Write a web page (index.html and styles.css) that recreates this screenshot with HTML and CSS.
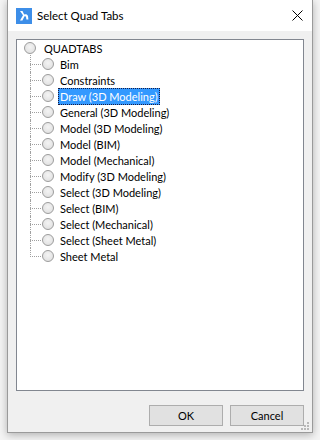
FILE: index.html
```html
<!DOCTYPE html>
<html lang="en">
<head>
    <meta charset="UTF-8">
    <title>Select Quad Tabs</title>
    <link rel="stylesheet" href="styles.css">
</head>
<body>
    <div class="window">
        <div class="titlebar">
            <svg class="logo" width="16" height="16" viewBox="0 0 16 16">
                <rect width="16" height="16" fill="#3d8ee8"/>
                <path d="M4 3 L6.5 3 L8.2 6.6 C9.5 6 11.5 6.3 12 8 L12.4 11.5 L10.4 11.5 L10 8.8 C9.7 8 8.8 8 8.4 8.6 L6.4 12.5 L4 12.5 L7 7.2 Z" fill="#fff"/>
            </svg>
            <span class="title">Select Quad Tabs</span>
            <svg class="close" width="11" height="11" viewBox="0 0 11 11">
                <path d="M0.5 0.5 L10.5 10.5 M10.5 0.5 L0.5 10.5" stroke="#000" stroke-width="1"/>
            </svg>
        </div>
        <div class="client">
            <div class="tree">
                <div class="row root"><span class="radio"></span><span class="label">QUADTABS</span></div>
                <div class="children">
                    <div class="row child"><span class="radio"></span><span class="label">Bim</span></div>
                    <div class="row child"><span class="radio"></span><span class="label">Constraints</span></div>
                    <div class="row child"><span class="radio"></span><span class="label selected">Draw (3D Modeling)</span></div>
                    <div class="row child"><span class="radio"></span><span class="label">General (3D Modeling)</span></div>
                    <div class="row child"><span class="radio"></span><span class="label">Model (3D Modeling)</span></div>
                    <div class="row child"><span class="radio"></span><span class="label">Model (BIM)</span></div>
                    <div class="row child"><span class="radio"></span><span class="label">Model (Mechanical)</span></div>
                    <div class="row child"><span class="radio"></span><span class="label">Modify (3D Modeling)</span></div>
                    <div class="row child"><span class="radio"></span><span class="label">Select (3D Modeling)</span></div>
                    <div class="row child"><span class="radio"></span><span class="label">Select (BIM)</span></div>
                    <div class="row child"><span class="radio"></span><span class="label">Select (Mechanical)</span></div>
                    <div class="row child"><span class="radio"></span><span class="label">Select (Sheet Metal)</span></div>
                    <div class="row child last"><span class="radio"></span><span class="label">Sheet Metal</span></div>
                </div>
            </div>
            <div class="buttons">
                <button class="btn">OK</button>
                <button class="btn">Cancel</button>
            </div>
            <svg class="grip" width="9" height="9" viewBox="0 0 9 9">
                <rect x="6" y="0" width="2" height="2" fill="#b8b8b8"/>
                <rect x="3" y="3" width="2" height="2" fill="#b8b8b8"/>
                <rect x="6" y="3" width="2" height="2" fill="#b8b8b8"/>
                <rect x="0" y="6" width="2" height="2" fill="#b8b8b8"/>
                <rect x="3" y="6" width="2" height="2" fill="#b8b8b8"/>
                <rect x="6" y="6" width="2" height="2" fill="#b8b8b8"/>
            </svg>
        </div>
    </div>
</body>
</html>
```

FILE: styles.css
```css
*{
    box-sizing: border-box;
    font-family: Lato, "Noto Sans", sans-serif;
}

body{
    margin: 0;
    background-color: #f4f4f4;
    width: 320px;
    height: 440px;
    overflow: hidden;
}

.window{
    margin-left: 7px;
    width: 306px;
    height: 433px;
    border: 1px solid #9a9a9a;
    border-top: none;
    display: flex;
    flex-direction: column;
    box-shadow: 0 2px 8px rgba(0,0,0,0.28);
}

.titlebar{
    height: 31px;
    background-color: #fff;
    display: flex;
    align-items: center;
    padding-left: 8px;
    padding-right: 9px;
}

.logo{
    flex: none;
}

.title{
    margin-left: 5px;
    font-size: 11.5px;
    color: #000;
    flex: 1;
}

.close{
    flex: none;
}

.client{
    flex: 1;
    background-color: #f0f0f0;
    padding: 8px 8px 0 8px;
    display: flex;
    flex-direction: column;
    position: relative;
}

.tree{
    height: 352px;
    background-color: #fff;
    border: 1px solid #828790;
}

.row{
    height: 16px;
    display: flex;
    align-items: center;
    font-size: 11px;
    color: #000;
    white-space: nowrap;
}

.root{
    padding-left: 7px;
}

.children{
    position: relative;
}

.child{
    padding-left: 25px;
    position: relative;
}

/* dotted connector lines */
.child::before{
    content: "";
    position: absolute;
    left: 13px;
    top: 8px;
    width: 11px;
    border-top: 1px dotted #a0a0a0;
}

.child::after{
    content: "";
    position: absolute;
    left: 13px;
    top: 0;
    height: 16px;
    border-left: 1px dotted #a0a0a0;
}

.root + .children .child:first-child::after{
    top: -1px;
    height: 17px;
}

.child.last::after{
    height: 9px;
}

.radio{
    flex: none;
    width: 12px;
    height: 12px;
    border-radius: 50%;
    border: 1px solid #9c9c9c;
    background: radial-gradient(circle at 50% 40%, #f4f4f4, #dcdcdc);
}

.label{
    margin-left: 6px;
    padding: 0 1px;
    line-height: 15px;
    border: 1px solid transparent;
}

.child .label{
    margin-left: 4px;
}

.selected{
    background-color: #3399ff;
    color: #fff;
    border: 1px dotted #1a1a40;
}

.buttons{
    display: flex;
    justify-content: flex-end;
    gap: 7px;
    margin-top: 14px;
}

.btn{
    width: 74px;
    height: 21px;
    background-color: #e1e1e1;
    border: 1px solid #adadad;
    font-size: 11px;
    color: #000;
    padding: 0;
}

.grip{
    position: absolute;
    right: 2px;
    bottom: 1px;
}
```
